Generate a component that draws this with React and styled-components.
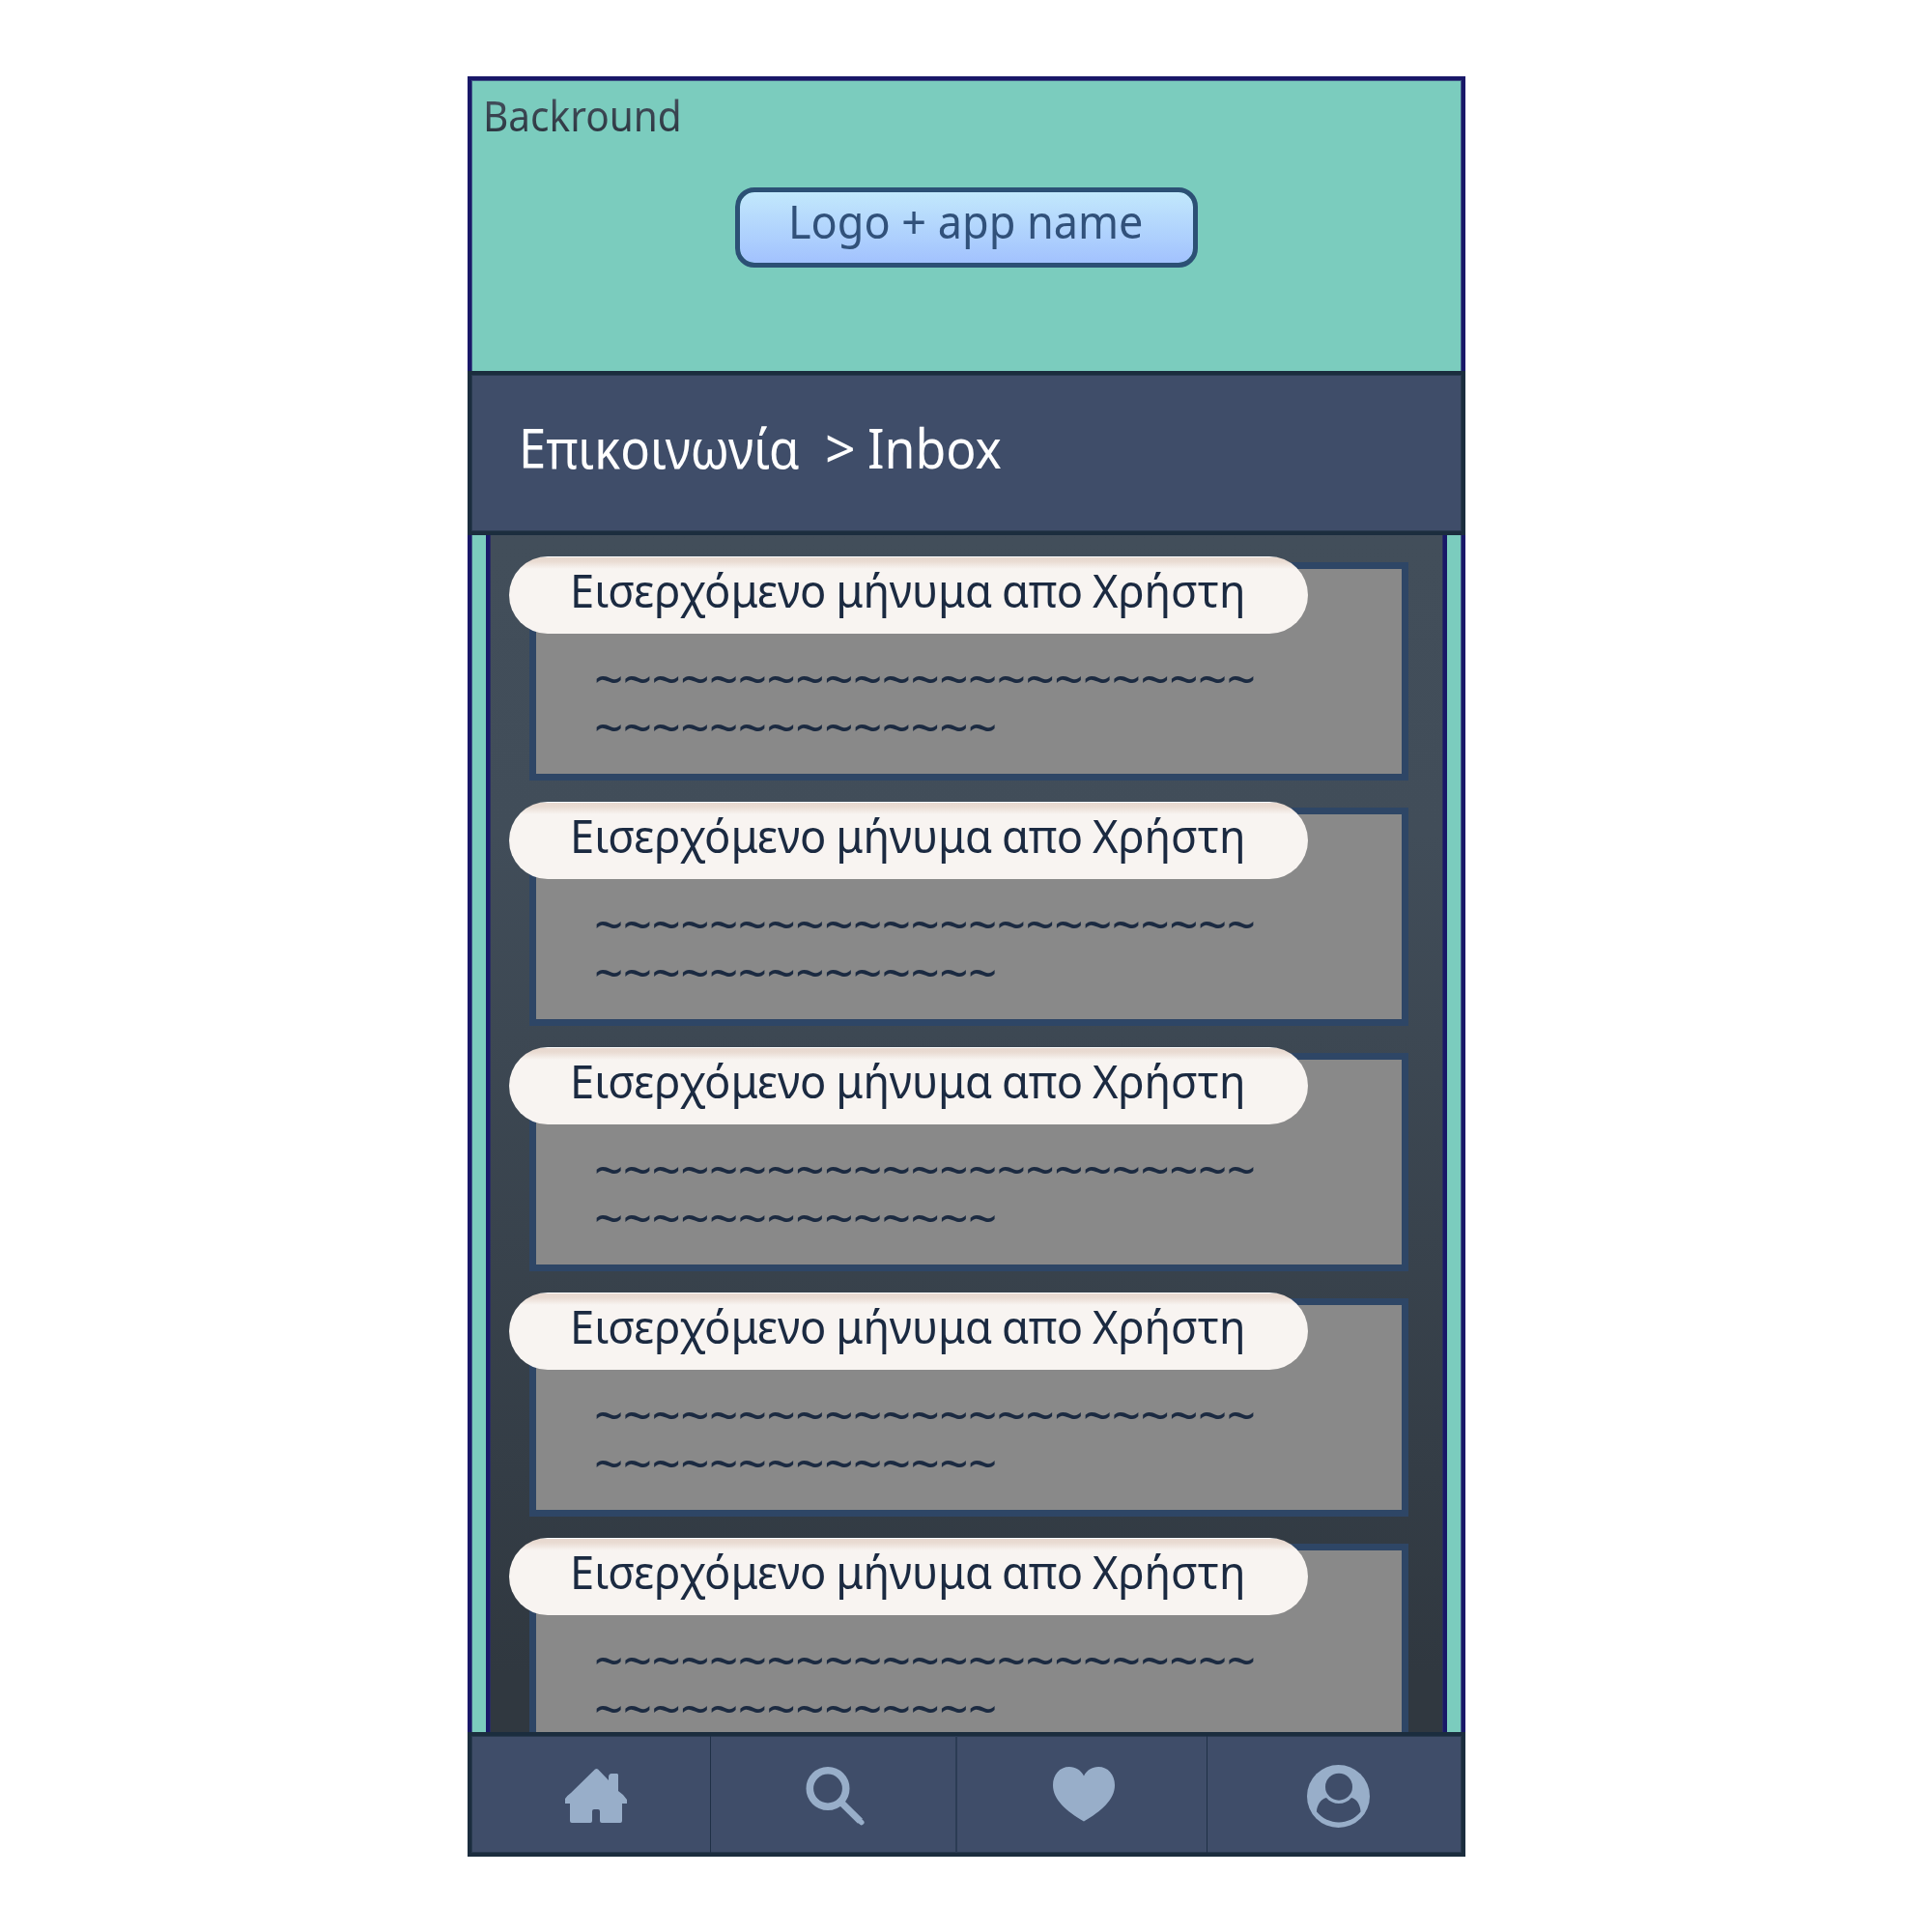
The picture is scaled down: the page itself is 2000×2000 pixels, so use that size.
import React from 'react';
import styled, { createGlobalStyle } from 'styled-components';

const GlobalStyle = createGlobalStyle`
  * { box-sizing: border-box; }
  body { margin: 0; background: #fff; }
`;

const Page = styled.main`
  width: 2000px;
  height: 2000px;
  padding: 79px 0 0 484px;
  font-family: 'Noto Sans', 'Open Sans', sans-serif;
  background: #fff;
  overflow: hidden;
`;

const Phone = styled.div`
  display: flex;
  flex-direction: column;
  width: 1033px;
  height: 1843px;
  background: #7bccbe;
`;

const Label = styled.span`
  display: block;
  width: max-content;
  white-space: pre;
  font-size: ${(p) => p.$size}px;
  line-height: ${(p) => p.$line}px;
  transform: scaleX(${(p) => p.$stretch || 1});
  transform-origin: left center;
`;

const Banner = styled.header`
  height: 305px;
  padding: 6px 0 0 11.5px;
  border: 4px solid #191868;
  border-bottom: 0;
  box-shadow: inset 1px 1px #3f5586, inset -1px 0 #3f5586;
`;

const Caption = styled(Label)`
  color: transparent;
  background: linear-gradient(#434e5b 14px, #2e3742 48px);
  background-clip: text;
`;

const LogoBox = styled.div`
  width: 479px;
  height: 83px;
  margin: 45px 0 0 261.5px;
  padding-left: 50px;
  color: #31517a;
  background: linear-gradient(#c2e8fc, #a2c2fe) padding-box;
  border: 5px solid #2c5075;
  border-radius: 20px;
`;

const TitleBar = styled.div`
  display: flex;
  height: 170px;
  padding-left: 49px;
  color: #fff;
  background: #3f4d69;
  border: 4px solid #1b2d3e;
  box-shadow: inset 0 0 0 1px #28394e;
`;

const Crumb = styled(Label)`
  flex: none;
  width: ${(p) => p.$width}px;
`;

const Body = styled.div`
  height: 1239px;
  padding: 0 15px;
  border: solid #191868;
  border-width: 0 4px;
  box-shadow: inset 1px 0 #3f5586, inset -1px 0 #3f5586;
`;

const Inbox = styled.section`
  display: flex;
  flex-direction: column;
  gap: 22px;
  height: 100%;
  padding: 22px 0 0 20px;
  overflow: hidden;
  background: linear-gradient(#424e5a 0%, #414d59 25%, #303840 95%);
  border: solid #191868;
  border-width: 0 4px;
  box-shadow: inset 1px 0 #2a2c62, inset -1px 0 #2a2c62;
`;

const Message = styled.article`
  display: grid;
  flex: none;
  height: 232px;
  color: #1b2a41;
  & > * { grid-area: 1 / 1; }
`;

const Card = styled.div`
  width: 910px;
  height: 226px;
  margin: 6px 0 0 21px;
  padding: 88px 0 0 60px;
  background: #898989;
  border: 7px solid #2e4666;
`;

const Wave = styled(Label)`
  letter-spacing: -0.55px;
`;

const Pill = styled.div`
  width: 827px;
  height: 80px;
  padding-left: 63px;
  word-spacing: -2px;
  border-radius: 40px;
  background: linear-gradient(#fff 1px, #e8d9cf 1px, #e9dbd2 5px, #f8f4f1 13px);
`;

const TabBar = styled.nav`
  display: grid;
  grid-template-columns: 248px 255px 259px 1fr;
  height: 129px;
  background: #3f4d69;
  border: 4px solid #1b2d3e;
  box-shadow: inset 0 0 0 1px #28394e;
`;

const Tab = styled.button`
  display: flex;
  padding: ${(p) => p.$top}px 0 0 ${(p) => p.$left}px;
  color: #98aec9;
  background: none;
  border: 0;
  border-right: ${(p) => p.$divider || 0}px solid ${(p) => (p.$divider > 1 ? '#2b3c54' : '#1f3046')};
`;

const Icon = styled.svg`
  display: block;
  flex: none;
`;

const messages = [1, 2, 3, 4, 5];

export default function App() {
  return (
    <Page>
      <GlobalStyle />
      <Phone>
        <Banner>
          <Caption $size={43.5} $line={60} $stretch={0.932}>Backround</Caption>
          <LogoBox>
            <Label $size={47.6} $line={59} $stretch={0.945}>Logo + app name</Label>
          </LogoBox>
        </Banner>
        <TitleBar>
          <Crumb $size={56} $line={151} $width={316.5} $stretch={0.906}>Επικοινωνία</Crumb>
          <Crumb $size={56} $line={151} $width={44.5} $stretch={0.99}>&gt;</Crumb>
          <Crumb $size={56} $line={151} $width={140} $stretch={0.924}>Inbox</Crumb>
        </TitleBar>
        <Body>
          <Inbox>
            {messages.map((id) => (
              <Message key={id}>
                <Card>
                  <Wave $size={53} $line={50}>{'~'.repeat(23)}</Wave>
                  <Wave $size={53} $line={50}>{'~'.repeat(14)}</Wave>
                </Card>
                <Pill>
                  <Label $size={47.6} $line={69} $stretch={0.95}>Εισερχόμενο μήνυμα απο Χρήστη</Label>
                </Pill>
              </Message>
            ))}
          </Inbox>
        </Body>
        <TabBar>
          <Tab $left={97} $top={34} $divider={1}>
            <Icon width="64" height="56" viewBox="0 0 64 56" fill="currentColor">
              <path d="M31 0.500 Q32.500 -0.500 34 0.500 L45 12 V8 Q45.500 5 48 5 H54 L55 6 V23 L60 27 L64 32 V36 H59 V54 Q59 56 57 56 H38 Q36 56 36 54 V44 Q36 42 34 42 H30 Q28 42 28 44 V54 Q28 56 26 56 H7 Q5 56 5 54 V36 H0 V31 Q3 27 6 25 Z" />
            </Icon>
          </Tab>
          <Tab $left={98} $top={32} $divider={2}>
            <Icon width="62" height="61" viewBox="0 0 62 61" fill="none" stroke="currentColor">
              <circle cx="23" cy="22.500" r="18.700" strokeWidth="7.600" />
              <path d="M37 37 L56.500 56.200" strokeWidth="7" />
              <path d="M55.500 55.500 L57.800 57.500" strokeWidth="5.500" strokeLinecap="round" />
            </Icon>
          </Tab>
          <Tab $left={99} $top={32} $divider={1}>
            <Icon width="64" height="57" viewBox="0 0 64 57" fill="currentColor">
              <path d="M32 9.500 C29 3.500 23.500 0 17 0 C7 0 0 8 0 19 C0 34 14 46 32 56.500 C50 46 64 34 64 19 C64 8 57 0 47 0 C40.500 0 35 3.500 32 9.500 Z" />
            </Icon>
          </Tab>
          <Tab $left={103} $top={30}>
            <Icon width="65" height="65" viewBox="0 0 65 65">
              <circle cx="32.500" cy="32.500" r="32.500" fill="currentColor" />
              <circle cx="33" cy="22.700" r="14" fill="#3f4d69" />
              <path d="M20 34 C27 42 39 42 46 34 C52 35 55.500 43 55.500 48.500 C44 63 22 63 10 48.500 C10 43 14 35 20 34 Z" fill="#3f4d69" />
            </Icon>
          </Tab>
        </TabBar>
      </Phone>
    </Page>
  );
}
